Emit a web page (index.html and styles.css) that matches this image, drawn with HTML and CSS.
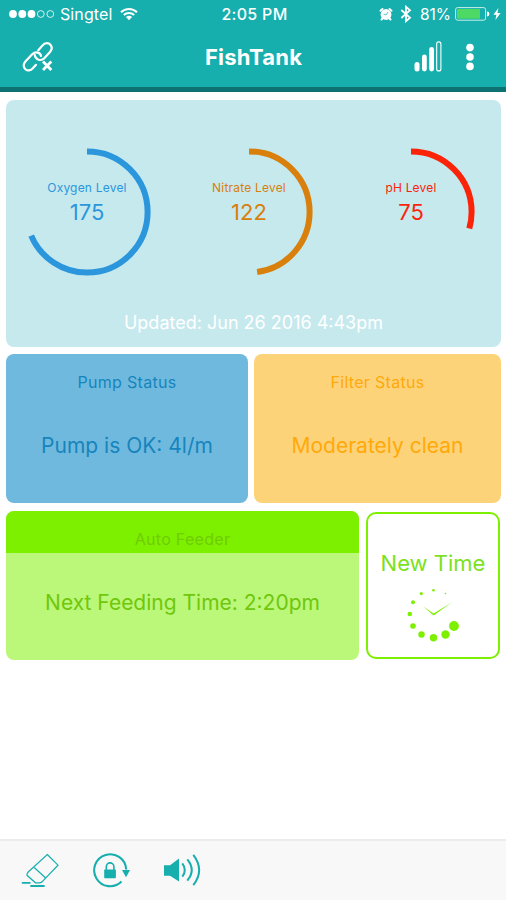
FILE: index.html
```
<!DOCTYPE html>
<html lang="en">
<head>
    <meta charset="UTF-8">
    <meta name="viewport" content="width=device-width, initial-scale=1.0">
    <title>FishTank</title>
    <link rel="stylesheet" href="styles.css">
</head>
<body>
    <header class="header">
        <div class="status-bar">
            <div class="status-left">
                <svg class="signal-dots" width="48" height="10" viewBox="0 0 48 10">
                    <g fill="#fff">
                        <circle cx="5" cy="5" r="3.9"/>
                        <circle cx="14.3" cy="5" r="3.9"/>
                        <circle cx="23.5" cy="5" r="3.9"/>
                    </g>
                    <g fill="none" stroke="#d5f3f2" stroke-width="1">
                        <circle cx="32.8" cy="5" r="3.4"/>
                        <circle cx="42.3" cy="5" r="3.4"/>
                    </g>
                </svg>
                <span class="carrier">Singtel</span>
                <svg class="wifi" width="18" height="14" viewBox="0 0 18 14" fill="none" stroke="#fff" stroke-width="2">
                    <path d="M1 5.2a11.5 11.5 0 0 1 16 0M3.8 8a7.5 7.5 0 0 1 10.4 0"/>
                    <path d="M9 13.2L5.9 10.1a4.6 4.6 0 0 1 6.2 0z" fill="#fff" stroke="none"/>
                </svg>
            </div>
            <span class="clock">2:05 PM</span>
            <div class="status-right">
                <svg width="14" height="14" viewBox="0 0 14 14">
                    <circle cx="7" cy="7.5" r="5.4" fill="#fff"/>
                    <path d="M1.5 3.8L3.5 2M12.5 3.8L10.5 2M3.5 11.5l-1 1M10.5 11.5l1 1" stroke="#fff" stroke-width="2" stroke-linecap="round"/>
                    <path d="M9 5L7 8L4.7 7" fill="none" stroke="#17aeae" stroke-width=".7"/>
                </svg>
                <svg class="bluetooth" width="12" height="18" viewBox="0 0 12 18" fill="none" stroke="#fff" stroke-width="1.8">
                    <path d="M1.3 5L10 12.8L6 16.2V1.8L10 5.2L1.3 13"/>
                </svg>
                <span class="percent">81%</span>
                <svg class="battery" width="36" height="14" viewBox="0 0 36 14">
                    <rect x=".6" y=".6" width="30" height="12.6" rx="2" fill="none" stroke="#c9f1e8"/>
                    <rect x="2" y="2" width="23" height="9.8" rx=".8" fill="#4cd964"/>
                    <path d="M32 4.6q2.4 0 2.4 2.4t-2.4 2.4z" fill="#fff"/>
                </svg>
                <svg width="8" height="12" viewBox="0 0 8 12">
                    <path d="M5.4 0L.4 6.7h3L2.4 12L7.6 5H4.5z" fill="#fff"/>
                </svg>
            </div>
        </div>
        <div class="nav-bar">
            <svg class="link-icon" width="32" height="32" viewBox="0 0 32 32" fill="none" stroke="#fff" stroke-width="2.2" stroke-linecap="round">
                <path d="M16.3 9.2L20.3 4.6C23.2 1 27 1.9 28.4 3.7C30.3 6 30 8.8 28 11L22.5 17C19.2 20.4 13.6 19.4 12.7 13.8"/>
                <path d="M19 15C18.5 11.5 13.6 10 10.2 13.2L3.6 20.2C1 23 1.2 26.2 3.4 28.2C5.6 30.2 8.6 29.8 10.8 27.3L14 23.8"/>
                <path d="M21 20.5L29.3 28.9M29.3 20.5L21 28.9" stroke-width="2.8" stroke-linecap="butt"/>
            </svg>
            <h1 class="title">FishTank</h1>
            <div class="nav-actions">
                <svg width="28" height="32" viewBox="0 0 28 32" fill="#fff">
                    <rect x="0.5" y="21" width="5" height="9.5" rx="2.5"/>
                    <rect x="8" y="13.5" width="4.8" height="17" rx="2.4"/>
                    <rect x="15.2" y="6" width="4.8" height="24.5" rx="2.4"/>
                    <rect x="22.7" y=".9" width="4.2" height="29" rx="2" fill="none" stroke="#fff" stroke-width="1.1"/>
                </svg>
                <svg class="more-icon" width="10" height="28" viewBox="0 0 10 28" fill="#fff">
                    <circle cx="5" cy="4.6" r="3.8"/>
                    <circle cx="5" cy="14" r="3.8"/>
                    <circle cx="5" cy="23.4" r="3.8"/>
                </svg>
            </div>
        </div>
    </header>

    <main class="dashboard">
        <section class="card levels">
            <div class="gauges">
                <div class="gauge oxygen">
                    <svg class="ring" viewBox="0 0 128 128">
                        <circle cx="64" cy="64" r="60.6" pathLength="255" stroke-dasharray="175 255"/>
                    </svg>
                    <div class="gauge-label">Oxygen Level</div>
                    <div class="gauge-value">175</div>
                </div>
                <div class="gauge nitrate">
                    <svg class="ring" viewBox="0 0 128 128">
                        <circle cx="64" cy="64" r="60.6" pathLength="255" stroke-dasharray="122 255"/>
                    </svg>
                    <div class="gauge-label">Nitrate Level</div>
                    <div class="gauge-value">122</div>
                </div>
                <div class="gauge ph">
                    <svg class="ring" viewBox="0 0 128 128">
                        <circle cx="64" cy="64" r="60.6" pathLength="255" stroke-dasharray="75 255"/>
                    </svg>
                    <div class="gauge-label">pH Level</div>
                    <div class="gauge-value">75</div>
                </div>
            </div>
            <p class="updated">Updated: Jun 26 2016 4:43pm</p>
        </section>

        <div class="row">
            <section class="card pump">
                <h2 class="card-title">Pump Status</h2>
                <p class="card-value">Pump is OK: 4l/m</p>
            </section>
            <section class="card filter">
                <h2 class="card-title">Filter Status</h2>
                <p class="card-value">Moderately clean</p>
            </section>
        </div>

        <div class="row">
            <section class="card feeder">
                <h2 class="card-title">Auto Feeder</h2>
                <p class="card-value">Next Feeding Time: 2:20pm</p>
            </section>
            <button class="new-time">
                <span>New Time</span>
                <svg width="54" height="54" viewBox="0 0 54 54" fill="#7df000">
                    <circle cx="39.5" cy="5.5" r=".8"/>
                    <circle cx="27.5" cy="2.2" r="1.3"/>
                    <circle cx="15.3" cy="5.6" r="1.6"/>
                    <circle cx="7" cy="14.3" r="2"/>
                    <circle cx="3.8" cy="26" r="2.3"/>
                    <circle cx="7" cy="38" r="2.8"/>
                    <circle cx="15.5" cy="46.5" r="3.2"/>
                    <circle cx="27.5" cy="49.7" r="3.7"/>
                    <circle cx="39.5" cy="46.5" r="4.2"/>
                    <circle cx="48" cy="38" r="4.9"/>
                    <path d="M17.3 18.5L27.6 25.4L46 14.3L27.6 27.6z"/>
                </svg>
            </button>
        </div>
    </main>

    <footer class="toolbar">
        <svg width="38" height="36" viewBox="0 0 38 36" fill="none" stroke="#17aeae" stroke-width="1.2">
            <path d="M26.3 1.5L37 12.2L22 27.8Q20.5 29.8 18.5 29.8H14.5L6 22.3Q5.6 20.7 7.2 19z"/>
            <path d="M13.2 14.5L24.7 25"/>
            <path d="M.8 29.8H9.5M9.3 33H23.6" stroke-width="1.8"/>
        </svg>
        <svg width="38" height="36" viewBox="0 0 38 36">
            <path d="M29.5 28.6A16 16 0 1 1 34.2 16.5" fill="none" stroke="#17aeae" stroke-width="2.1"/>
            <path d="M30 17H38L34 24.2z" fill="#17aeae"/>
            <rect x="12.2" y="16.5" width="11.7" height="8.8" rx=".8" fill="#17aeae"/>
            <path d="M14.3 17V13.7a3.8 3.8 0 0 1 7.6 0V17" fill="none" stroke="#17aeae" stroke-width="1.6"/>
        </svg>
        <svg width="38" height="36" viewBox="0 0 38 36">
            <path d="M1 12.3H7L16 5.6V28.6L7 22.8H1z" fill="#17aeae"/>
            <g fill="none" stroke="#17aeae" stroke-width="2">
                <path d="M19.3 10.3Q24.3 17 19.3 23.7"/>
                <path d="M24.3 6.4Q33.2 17 24.3 27.6"/>
                <path d="M30.3 1.8Q42 17 30.3 32.2"/>
            </g>
        </svg>
    </footer>
</body>
</html>
```
FILE: styles.css
```
* {
    box-sizing: border-box;
    margin: 0;
    padding: 0;
}

body {
    display: flex;
    flex-direction: column;
    height: 100vh;
    font-family: Inter, "Liberation Sans", sans-serif;
    background: #fff;
    overflow: hidden;
}

svg {
    display: block;
    flex-shrink: 0;
}

.header {
    height: 92px;
    background: #17aeae;
    border-bottom: 5px solid #0f7272;
    color: #fff;
}

.status-bar,
.nav-bar {
    display: grid;
    grid-template-columns: 1fr auto 1fr;
    align-items: center;
}

.status-bar {
    height: 28px;
    padding: 0 5px 0 8px;
    font-size: 16px;
}

.status-left,
.status-right {
    display: flex;
    align-items: center;
}

.status-right {
    justify-content: flex-end;
}

.carrier {
    margin: 0 8px 0 4px;
    letter-spacing: 0.1px;
}

.clock {
    font-weight: 500;
    letter-spacing: 0.3px;
}

.bluetooth {
    margin: 0 8px 0 7px;
}

.percent {
    font-size: 15.5px;
}

.battery {
    margin: 0 2px 0 4px;
}

.nav-bar {
    height: 58px;
    padding: 0 31px 0 22px;
}

.title {
    margin: 0 -5px 0 5px;
    font-size: 22px;
    font-weight: 700;
    letter-spacing: 0.2px;
}

.nav-actions {
    display: flex;
    align-items: center;
    justify-content: flex-end;
    gap: 23px;
}

.dashboard {
    display: flex;
    flex: 1;
    flex-direction: column;
    gap: 8px;
    padding: 8px 5px 0 6px;
}

.card {
    border-radius: 8px;
    text-align: center;
}

.levels {
    height: 247px;
    margin-bottom: -1px;
    padding-top: 48px;
    background: #c6e9ee;
}

.gauges {
    display: flex;
    justify-content: space-between;
    padding: 0 26px 0 17px;
}

.gauge {
    position: relative;
    width: 128px;
    height: 128px;
    padding-top: 32px;
}

/* Arc starts at 12 o'clock, full scale is 255 */
.ring {
    position: absolute;
    inset: 0;
    transform: rotate(-90deg);
    fill: none;
    stroke: currentColor;
    stroke-width: 6;
}

.gauge-label {
    font-size: 12px;
    line-height: 15px;
    letter-spacing: 0.2px;
}

.gauge-value {
    margin-top: 4px;
    font-size: 22px;
    line-height: 27px;
}

.oxygen {
    color: #2b96dc;
}

.nitrate {
    color: #d87f0c;
}

.ph {
    color: #fb2409;
}

.updated {
    margin-top: 36px;
    font-size: 18px;
    line-height: 22px;
    color: #fff;
}

.row {
    display: flex;
    gap: 6px;
    height: 149px;
}

.card-title {
    padding-top: 18px;
    font-size: 16px;
    font-weight: 400;
    line-height: 20px;
    letter-spacing: 0.3px;
}

.card-value {
    margin-top: 40px;
    font-size: 21px;
    line-height: 28px;
}

.pump {
    width: 242px;
    background: #70b9de;
    color: #1685bd;
}

.filter {
    flex: 1;
    background: #fdd379;
    color: #ffa90a;
}

.feeder {
    width: 353px;
    background: #bbf779;
    color: #70c70c;
    overflow: hidden;
}

.feeder .card-title {
    height: 42px;
    background: #7df000;
    color: #6fcc05;
}

.feeder .card-value {
    margin-top: 36px;
}

.new-time {
    display: flex;
    flex-direction: column;
    align-items: center;
    width: 134px;
    height: 147px;
    margin: 1px 0 0 1px;
    padding-top: 35px;
    border: 2px solid #7df000;
    border-radius: 10px;
    background: #fff;
    color: #7be21c;
    font-family: inherit;
    font-size: 22px;
    line-height: 28px;
}

.new-time svg {
    margin-top: 11px;
}

.toolbar {
    display: flex;
    align-items: center;
    gap: 33px;
    height: 61px;
    padding-left: 21px;
    background: #f8f8f8;
    border-top: 2px solid #ececec;
}
```
